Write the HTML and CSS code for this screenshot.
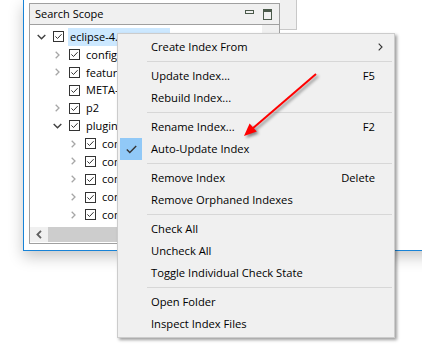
FILE: index.html
```html
<!DOCTYPE html>
<html lang="en">
<head>
  <meta charset="UTF-8" />
  <title>Search Scope</title>
  <link rel="stylesheet" href="styles.css">
</head>
<body>

<div class="window">
  <div class="view">
    <div class="view-head">
      <span class="view-title">Search Scope</span>
      <span class="view-tools">
        <svg width="9" height="4" viewBox="0 0 9 4"><rect x="0.5" y="0.5" width="8" height="3" fill="none" stroke="#4b5a4b"/></svg>
        <svg width="9" height="11" viewBox="0 0 9 11"><rect x="0.5" y="0.5" width="8" height="10" fill="none" stroke="#4b5a4b"/><rect x="0" y="0" width="9" height="3" fill="#4b5a4b"/></svg>
      </span>
    </div>
    <div class="tree">
      <ul class="rows">
        <li class="row lvl0"><span class="twisty open"></span><span class="cb"></span><span class="label sel">eclipse-4.7.1 (jee)</span></li>
        <li class="row lvl1"><span class="twisty"></span><span class="cb"></span><span class="label">configuration</span></li>
        <li class="row lvl1"><span class="twisty"></span><span class="cb"></span><span class="label">features</span></li>
        <li class="row lvl1"><span class="twisty none"></span><span class="cb"></span><span class="label">META-INF</span></li>
        <li class="row lvl1"><span class="twisty"></span><span class="cb"></span><span class="label">p2</span></li>
        <li class="row lvl1"><span class="twisty open"></span><span class="cb"></span><span class="label">plugins</span></li>
        <li class="row lvl2"><span class="twisty"></span><span class="cb"></span><span class="label">com.ibm.icu</span></li>
        <li class="row lvl2"><span class="twisty"></span><span class="cb"></span><span class="label">com.jcraft</span></li>
        <li class="row lvl2"><span class="twisty"></span><span class="cb"></span><span class="label">com.sun.el</span></li>
        <li class="row lvl2"><span class="twisty"></span><span class="cb"></span><span class="label">com.google</span></li>
        <li class="row lvl2"><span class="twisty"></span><span class="cb"></span><span class="label">com.sun.jna</span></li>
      </ul>
      <div class="vbar"></div>
    </div>
    <div class="hscroll">
      <span class="harrow"><svg width="6" height="9" viewBox="0 0 6 9"><polyline points="5,0.8 1.4,4.5 5,8.2" fill="none" stroke="#606060" stroke-width="1.8"/></svg></span>
      <span class="hthumb"></span>
    </div>
  </div>
  <div class="side"></div>
</div>

<div class="menu">
  <div class="item"><span class="mark"></span><span class="text">Create Index From</span><span class="sub"><svg width="5" height="8" viewBox="0 0 5 8"><polyline points="0.7,0.7 4,4 0.7,7.3" fill="none" stroke="#333" stroke-width="1.1"/></svg></span></div>
  <div class="sep"></div>
  <div class="item"><span class="mark"></span><span class="text">Update Index...</span><span class="key">F5</span></div>
  <div class="item"><span class="mark"></span><span class="text">Rebuild Index...</span></div>
  <div class="sep"></div>
  <div class="item"><span class="mark"></span><span class="text">Rename Index...</span><span class="key">F2</span></div>
  <div class="item"><span class="mark on"><svg width="11" height="9" viewBox="0 0 11 9"><polyline points="0.8,4.4 3.8,7.4 10.2,1" fill="none" stroke="#333" stroke-width="1.4"/></svg></span><span class="text">Auto-Update Index</span></div>
  <div class="sep"></div>
  <div class="item"><span class="mark"></span><span class="text">Remove Index</span><span class="key">Delete</span></div>
  <div class="item"><span class="mark"></span><span class="text">Remove Orphaned Indexes</span></div>
  <div class="sep"></div>
  <div class="item"><span class="mark"></span><span class="text">Check All</span></div>
  <div class="item"><span class="mark"></span><span class="text">Uncheck All</span></div>
  <div class="item"><span class="mark"></span><span class="text">Toggle Individual Check State</span></div>
  <div class="sep"></div>
  <div class="item"><span class="mark"></span><span class="text">Open Folder</span></div>
  <div class="item"><span class="mark"></span><span class="text">Inspect Index Files</span></div>
</div>

<!-- red callout arrow drawn over the screenshot -->
<svg class="callout" width="422" height="358" viewBox="0 0 422 358">
  <line x1="316" y1="74" x2="252" y2="129" stroke="#f00" stroke-width="2"/>
  <polygon points="244,136 256.8,131.6 249.6,123.4" fill="#f00"/>
</svg>

</body>
</html>
```

FILE: styles.css
```css
* { box-sizing: border-box; margin: 0; padding: 0; }
body { position: relative; width: 422px; height: 358px; overflow: hidden; background: #fff; color: #000; font-family: "Open Sans", "Noto Sans", sans-serif; font-size: 11.2px; }

/* dialog window, runs off the top and right edge */
.window { display: flex; margin-left: 23px; width: 470px; height: 251px; padding: 3px 0 0 5px; background: #fff; border-left: 1px solid #1883d7; border-bottom: 1px solid #1883d7; box-shadow: 0 6px 14px rgba(0, 0, 0, 0.22); }
.view { display: flex; flex-direction: column; width: 251px; height: 241px; border: 1px solid #a0a0a0; }
.view-head { display: flex; align-items: center; justify-content: space-between; height: 21px; padding: 0 7px 0 5px; background: #f0f0f0; border-bottom: 1px solid #a0a0a0; }
.view-title { line-height: 20px; font-size: 11px; }
.view-tools { display: flex; align-items: flex-start; gap: 9px; }
.view-tools svg { display: block; }
.view-tools svg:first-child { margin-top: 1px; }
.side { width: 17px; height: 30px; margin-top: -3px; background: #f0f0f0; border-right: 1px solid #c8c8c8; border-bottom: 1px solid #c8c8c8; }

.tree { display: flex; flex: 1; overflow: hidden; }
.rows { flex: 1; list-style: none; padding-top: 3px; overflow: hidden; }
.vbar { width: 17px; background: #f0f0f0; }
.row { display: flex; align-items: center; height: 17.8px; white-space: nowrap; font-size: 11px; }
.lvl0 { padding-left: 3px; }
.lvl1 { padding-left: 19px; }
.lvl2 { padding-left: 35px; }
.twisty { flex: none; width: 16px; height: 16px; margin-right: 4px; background-repeat: no-repeat; background-position: center; background-image: url("data:image/svg+xml,%3Csvg xmlns='http://www.w3.org/2000/svg' width='5' height='8'%3E%3Cpolyline points='0.7,0.7 4,4 0.7,7.3' fill='none' stroke='%23a6a6a6' stroke-width='1.3'/%3E%3C/svg%3E"); }
.twisty.open { background-image: url("data:image/svg+xml,%3Csvg xmlns='http://www.w3.org/2000/svg' width='9' height='6'%3E%3Cpolyline points='0.7,0.9 4.5,4.7 8.3,0.9' fill='none' stroke='%23404040' stroke-width='1.4'/%3E%3C/svg%3E"); }
.twisty.none { background-image: none; }
.cb { flex: none; width: 11px; height: 11px; margin-right: 4px; background: #fff url("data:image/svg+xml,%3Csvg xmlns='http://www.w3.org/2000/svg' width='11' height='11'%3E%3Crect x='0.5' y='0.5' width='10' height='10' fill='none' stroke='%23333'/%3E%3Cpolyline points='2.4,5.4 4.5,7.5 8.6,3.2' fill='none' stroke='%23333' stroke-width='1'/%3E%3C/svg%3E") no-repeat; }
.label { padding: 1px 4px 1px 2px; line-height: 15.8px; }
.label.sel { padding-right: 12px; background: #cce8ff; }

.hscroll { display: flex; height: 15px; margin-bottom: 1px; background: #f0f0f0; }
.harrow { display: flex; align-items: center; justify-content: center; width: 17px; }
.hthumb { flex: 1; margin-left: 1px; background: #cdcdcd; }

/* context menu */
.menu { position: absolute; left: 117px; top: 33px; width: 278px; padding: 2px; background: #f0f0f0; border: 1px solid #cccccc; box-shadow: 2px 2px 3px rgba(0, 0, 0, 0.38); }
.item { display: flex; align-items: center; height: 22px; white-space: nowrap; }
.mark { display: flex; align-items: center; justify-content: center; flex: none; width: 22px; height: 22px; }
.mark.on { background: #91c9f7; }
.text { flex: 1; padding-left: 9px; margin-bottom: 2px; }
.key { padding-right: 17px; margin-bottom: 2px; }
.sub { display: flex; padding-right: 9px; margin-bottom: 1px; }
.sep { height: 7px; margin-left: 27px; padding-top: 3px; }
.sep::after { content: ""; display: block; height: 1px; background: #d7d7d7; }

.callout { position: absolute; left: 0; top: 0; pointer-events: none; filter: drop-shadow(2px 2px 1.5px rgba(0, 0, 0, 0.45)); }
```
